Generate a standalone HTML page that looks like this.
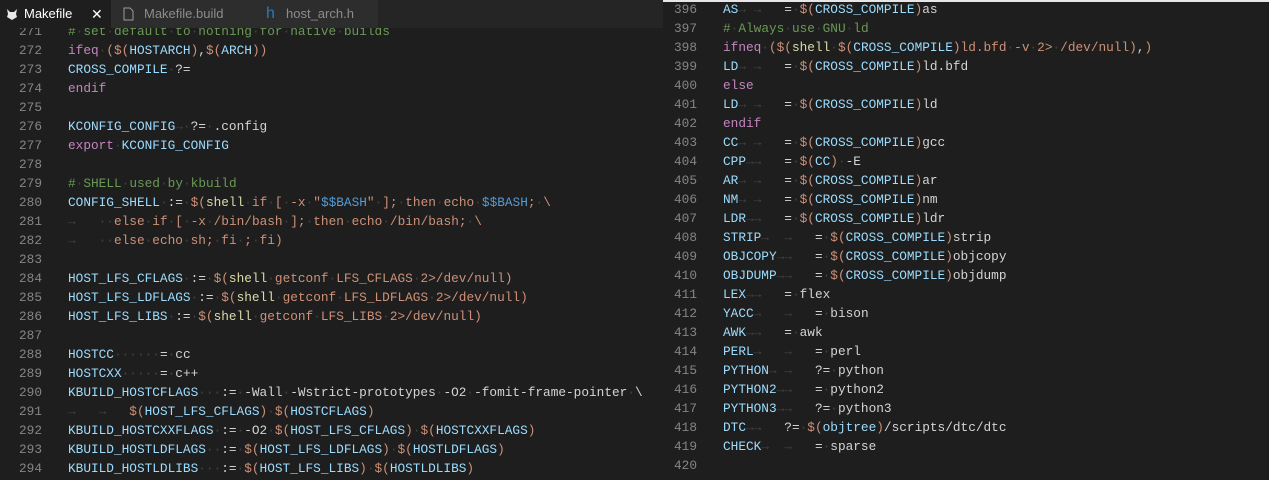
<!DOCTYPE html>
<html><head><meta charset="utf-8"><style>
*{margin:0;padding:0;box-sizing:border-box}
body{width:1269px;height:480px;background:#1e1e1e;overflow:hidden;position:relative;font-family:"Liberation Mono",monospace;font-size:12.77px;color:#d4d4d4}
.tabs{position:absolute;left:0;top:0;width:663px;height:28px;background:#252526}
.tab{position:absolute;top:0;height:28px;font-family:"Liberation Sans",sans-serif;font-size:13px;line-height:28px;color:#8c8c8c;background:#2d2d2d}
.tab.a{background:#1e1e1e;color:#fff}
.pane{position:absolute;overflow:hidden}
.ln{position:absolute;text-align:right;color:#858585;white-space:pre;line-height:19px}
.code{position:absolute;white-space:pre;line-height:19px}
.v{color:#9cdcfe}.k{color:#c586c0}.c{color:#6a9955}.o{color:#ce9178}.d{color:#424242}.f{color:#dcdcaa}.b{color:#569cd6}
</style></head><body>
<div class="pane" style="left:0;top:28px;width:663px;height:452px">
<div class="ln" style="left:0;width:42px;top:-6px">271
272
273
274
275
276
277
278
279
280
281
282
283
284
285
286
287
288
289
290
291
292
293
294</div>
<div class="code" style="left:68px;top:-6px"><span class="c">#<span class="d">·</span>set<span class="d">·</span>default<span class="d">·</span>to<span class="d">·</span>nothing<span class="d">·</span>for<span class="d">·</span>native<span class="d">·</span>builds</span>
<span class="k">ifeq</span><span class="d">·</span><span class="o">($(</span><span class="v">HOSTARCH</span><span class="o">)</span>,<span class="o">$(</span><span class="v">ARCH</span><span class="o">))</span>
<span class="v">CROSS_COMPILE</span><span class="d">·</span>?=
<span class="k">endif</span>

<span class="v">KCONFIG_CONFIG</span><span class="d">→</span><span class="d">·</span>?=<span class="d">·</span>.config
<span class="k">export</span><span class="d">·</span><span class="v">KCONFIG_CONFIG</span>

<span class="c">#<span class="d">·</span>SHELL<span class="d">·</span>used<span class="d">·</span>by<span class="d">·</span>kbuild</span>
<span class="v">CONFIG_SHELL</span><span class="d">·</span>:=<span class="d">·</span><span class="o">$(</span><span class="f">shell</span><span class="d">·</span><span class="o">if<span class="d">·</span>[<span class="d">·</span>-x<span class="d">·</span>"<span class="b">$$BASH</span>"<span class="d">·</span>];<span class="d">·</span>then<span class="d">·</span>echo<span class="d">·</span><span class="b">$$BASH</span>;<span class="d">·</span>\</span>
<span class="d">→   ··</span><span class="o">else<span class="d">·</span>if<span class="d">·</span>[<span class="d">·</span>-x<span class="d">·</span>/bin/bash<span class="d">·</span>];<span class="d">·</span>then<span class="d">·</span>echo<span class="d">·</span>/bin/bash;<span class="d">·</span>\</span>
<span class="d">→   ··</span><span class="o">else<span class="d">·</span>echo<span class="d">·</span>sh;<span class="d">·</span>fi<span class="d">·</span>;<span class="d">·</span>fi)</span>

<span class="v">HOST_LFS_CFLAGS</span><span class="d">·</span>:=<span class="d">·</span><span class="o">$(</span><span class="f">shell</span><span class="d">·</span><span class="o">getconf<span class="d">·</span>LFS_CFLAGS<span class="d">·</span>2&gt;/dev/null)</span>
<span class="v">HOST_LFS_LDFLAGS</span><span class="d">·</span>:=<span class="d">·</span><span class="o">$(</span><span class="f">shell</span><span class="d">·</span><span class="o">getconf<span class="d">·</span>LFS_LDFLAGS<span class="d">·</span>2&gt;/dev/null)</span>
<span class="v">HOST_LFS_LIBS</span><span class="d">·</span>:=<span class="d">·</span><span class="o">$(</span><span class="f">shell</span><span class="d">·</span><span class="o">getconf<span class="d">·</span>LFS_LIBS<span class="d">·</span>2&gt;/dev/null)</span>

<span class="v">HOSTCC</span><span class="d">······</span>=<span class="d">·</span>cc
<span class="v">HOSTCXX</span><span class="d">·····</span>=<span class="d">·</span>c++
<span class="v">KBUILD_HOSTCFLAGS</span><span class="d">···</span>:=<span class="d">·</span>-Wall<span class="d">·</span>-Wstrict-prototypes<span class="d">·</span>-O2<span class="d">·</span>-fomit-frame-pointer<span class="d">·</span>\
<span class="d">→   →   </span><span class="o">$(</span><span class="v">HOST_LFS_CFLAGS</span><span class="o">)</span><span class="d">·</span><span class="o">$(</span><span class="v">HOSTCFLAGS</span><span class="o">)</span>
<span class="v">KBUILD_HOSTCXXFLAGS</span><span class="d">·</span>:=<span class="d">·</span>-O2<span class="d">·</span><span class="o">$(</span><span class="v">HOST_LFS_CFLAGS</span><span class="o">)</span><span class="d">·</span><span class="o">$(</span><span class="v">HOSTCXXFLAGS</span><span class="o">)</span>
<span class="v">KBUILD_HOSTLDFLAGS</span><span class="d">··</span>:=<span class="d">·</span><span class="o">$(</span><span class="v">HOST_LFS_LDFLAGS</span><span class="o">)</span><span class="d">·</span><span class="o">$(</span><span class="v">HOSTLDFLAGS</span><span class="o">)</span>
<span class="v">KBUILD_HOSTLDLIBS</span><span class="d">···</span>:=<span class="d">·</span><span class="o">$(</span><span class="v">HOST_LFS_LIBS</span><span class="o">)</span><span class="d">·</span><span class="o">$(</span><span class="v">HOSTLDLIBS</span><span class="o">)</span></div>
</div>
<div class="tabs">
<div class="tab a" style="left:0;width:111px"><svg style="position:absolute;left:5px;top:7px" width="14" height="14" viewBox="0 0 14 14"><path d="M2 2l3 3h4l3-3-1 5 1 3-5 3-5-3 1-3z" fill="#e8e8e8"/></svg><span style="position:absolute;left:24px">Makefile</span><span style="position:absolute;left:91px;font-size:14px">✕</span></div>
<div class="tab" style="left:111px;width:141px"><svg style="position:absolute;left:12px;top:7px" width="11" height="14" viewBox="0 0 11 14"><path d="M1 1h6l3 3v9H1z" fill="none" stroke="#9a9a9a"/></svg><span style="position:absolute;left:33px">Makefile.build</span></div>
<div class="tab" style="left:252px;width:126px"><span style="position:absolute;left:14px;color:#2b7ab8;font-size:16px">h</span><span style="position:absolute;left:34px">host_arch.h</span></div>
</div>
<div class="pane" style="left:663px;top:0;width:606px;height:480px;border-top:2px solid #e6e6e6">
<div class="ln" style="left:0;width:34px;top:-2px">396
397
398
399
400
401
402
403
404
405
406
407
408
409
410
411
412
413
414
415
416
417
418
419
420</div>
<div class="code" style="left:60px;top:-2px"><span class="v">AS</span><span class="d">→ →   </span>=<span class="d">·</span><span class="o">$(</span><span class="v">CROSS_COMPILE</span><span class="o">)</span>as
<span class="c">#<span class="d">·</span>Always<span class="d">·</span>use<span class="d">·</span>GNU<span class="d">·</span>ld</span>
<span class="k">ifneq</span><span class="d">·</span><span class="o">($(</span><span class="f">shell</span><span class="d">·</span><span class="o">$(</span><span class="v">CROSS_COMPILE</span><span class="o">)ld.bfd<span class="d">·</span>-v<span class="d">·</span>2&gt;<span class="d">·</span>/dev/null)</span>,<span class="o">)</span>
<span class="v">LD</span><span class="d">→ →   </span>=<span class="d">·</span><span class="o">$(</span><span class="v">CROSS_COMPILE</span><span class="o">)</span>ld.bfd
<span class="k">else</span>
<span class="v">LD</span><span class="d">→ →   </span>=<span class="d">·</span><span class="o">$(</span><span class="v">CROSS_COMPILE</span><span class="o">)</span>ld
<span class="k">endif</span>
<span class="v">CC</span><span class="d">→ →   </span>=<span class="d">·</span><span class="o">$(</span><span class="v">CROSS_COMPILE</span><span class="o">)</span>gcc
<span class="v">CPP</span><span class="d">→→   </span>=<span class="d">·</span><span class="o">$(</span><span class="v">CC</span><span class="o">)</span><span class="d">·</span>-E
<span class="v">AR</span><span class="d">→ →   </span>=<span class="d">·</span><span class="o">$(</span><span class="v">CROSS_COMPILE</span><span class="o">)</span>ar
<span class="v">NM</span><span class="d">→ →   </span>=<span class="d">·</span><span class="o">$(</span><span class="v">CROSS_COMPILE</span><span class="o">)</span>nm
<span class="v">LDR</span><span class="d">→→   </span>=<span class="d">·</span><span class="o">$(</span><span class="v">CROSS_COMPILE</span><span class="o">)</span>ldr
<span class="v">STRIP</span><span class="d">→  →   </span>=<span class="d">·</span><span class="o">$(</span><span class="v">CROSS_COMPILE</span><span class="o">)</span>strip
<span class="v">OBJCOPY</span><span class="d">→→   </span>=<span class="d">·</span><span class="o">$(</span><span class="v">CROSS_COMPILE</span><span class="o">)</span>objcopy
<span class="v">OBJDUMP</span><span class="d">→→   </span>=<span class="d">·</span><span class="o">$(</span><span class="v">CROSS_COMPILE</span><span class="o">)</span>objdump
<span class="v">LEX</span><span class="d">→→   </span>=<span class="d">·</span>flex
<span class="v">YACC</span><span class="d">→   →   </span>=<span class="d">·</span>bison
<span class="v">AWK</span><span class="d">→→   </span>=<span class="d">·</span>awk
<span class="v">PERL</span><span class="d">→   →   </span>=<span class="d">·</span>perl
<span class="v">PYTHON</span><span class="d">→ →   </span>?=<span class="d">·</span>python
<span class="v">PYTHON2</span><span class="d">→→   </span>=<span class="d">·</span>python2
<span class="v">PYTHON3</span><span class="d">→→   </span>?=<span class="d">·</span>python3
<span class="v">DTC</span><span class="d">→→   </span>?=<span class="d">·</span><span class="o">$(</span><span class="v">objtree</span><span class="o">)</span>/scripts/dtc/dtc
<span class="v">CHECK</span><span class="d">→  →   </span>=<span class="d">·</span>sparse
</div>
</div>
</body></html>
